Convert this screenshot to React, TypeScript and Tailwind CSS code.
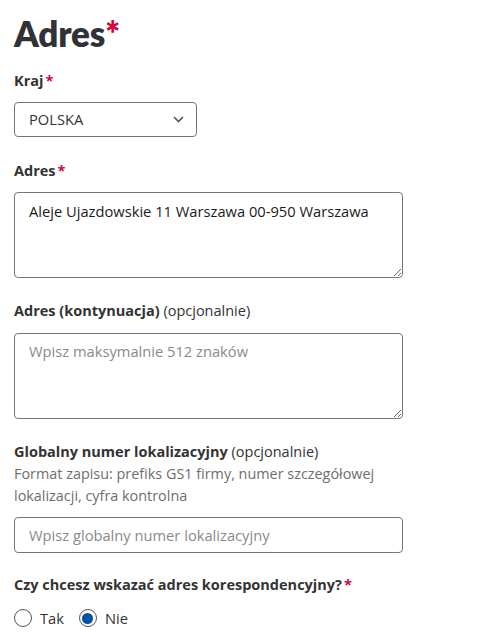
import { useState } from 'react'

function Star() {
  return <span className="text-[#d4003c] ml-[2px]">*</span>
}

function Label({ children }: { children: React.ReactNode }) {
  return <div className="text-[14.5px] leading-[22px] font-bold text-[#333]">{children}</div>
}

export default function App() {
  const [corr, setCorr] = useState<'tak' | 'nie'>('nie')

  return (
    <div
      className="w-[481px] h-[635px] overflow-hidden bg-white px-[14px] pt-[13px] text-[#333]"
      style={{ fontFamily: '"Open Sans", "Noto Sans", sans-serif' }}
    >
      <h1
        className="text-[35px] leading-[40px] font-extrabold tracking-[-0.2px] text-[#2f3337]"
        style={{ fontFamily: 'Lato, "Open Sans", sans-serif' }}
      >
        Adres<span className="text-[#d4003c]">*</span>
      </h1>

      <div className="mt-[17px]">
        <Label>
          Kraj<Star />
        </Label>
        <div className="relative mt-[10px] w-[183px] h-[35px] border border-[#757575] rounded-[4px] flex items-center pl-[14px]">
          <span className="text-[14.7px]">POLSKA</span>
          <svg
            className="absolute right-[12px] top-[13px]"
            width="11"
            height="7"
            viewBox="0 0 11 7"
            fill="none"
          >
            <path d="M1 1 L5.5 5.5 L10 1" stroke="#555" strokeWidth="1.6" />
          </svg>
        </div>
      </div>

      <div className="mt-[23px]">
        <Label>
          Adres<Star />
        </Label>
        <textarea
          readOnly
          value="Aleje Ujazdowskie 11 Warszawa 00-950 Warszawa"
          className="block mt-[10px] w-[389px] h-[86px] border border-[#757575] rounded-[4px] px-[14px] py-[7px] text-[14.7px] leading-[22px] text-[#1b1b1b] outline-none resize-y"
        />
      </div>

      <div className="mt-[22px]">
        <div className="text-[14.5px] leading-[22px] text-[#333]">
          <span className="font-bold">Adres (kontynuacja)</span> (opcjonalnie)
        </div>
        <textarea
          placeholder="Wpisz maksymalnie 512 znaków"
          className="block mt-[11px] w-[389px] h-[86px] border border-[#757575] rounded-[4px] px-[14px] py-[6px] text-[14.7px] leading-[22px] placeholder:text-[#8a8a8a] outline-none"
        />
      </div>

      <div className="mt-[22px]">
        <div className="text-[14.5px] leading-[22px] text-[#333]">
          <span className="font-bold">Globalny numer lokalizacyjny</span> (opcjonalnie)
        </div>
        <div className="text-[14.4px] leading-[22px] text-[#6e6e6e] w-[385px]">
          Format zapisu: prefiks GS1 firmy, numer szczegółowej lokalizacji, cyfra kontrolna
        </div>
        <input
          placeholder="Wpisz globalny numer lokalizacyjny"
          className="block mt-[10px] w-[389px] h-[36px] border border-[#757575] rounded-[4px] px-[14px] text-[14.7px] placeholder:text-[#8a8a8a] outline-none"
        />
      </div>

      <div className="mt-[21px]">
        <Label>
          Czy chcesz wskazać adres korespondencyjny?<Star />
        </Label>
        <div className="mt-[11px] flex items-center gap-[8px] text-[14.7px]">
          <label className="flex items-center gap-[8px] cursor-pointer" onClick={() => setCorr('tak')}>
            <span className="w-[18px] h-[18px] rounded-full border border-[#555] flex items-center justify-center">
              {corr === 'tak' && <span className="w-[11px] h-[11px] rounded-full bg-[#0052a5]" />}
            </span>
            <span>Tak</span>
          </label>
          <label className="flex items-center gap-[8px] cursor-pointer ml-[7px]" onClick={() => setCorr('nie')}>
            <span className="w-[18px] h-[18px] rounded-full border border-[#555] flex items-center justify-center">
              {corr === 'nie' && <span className="w-[11px] h-[11px] rounded-full bg-[#0052a5]" />}
            </span>
            <span>Nie</span>
          </label>
        </div>
      </div>
    </div>
  )
}
